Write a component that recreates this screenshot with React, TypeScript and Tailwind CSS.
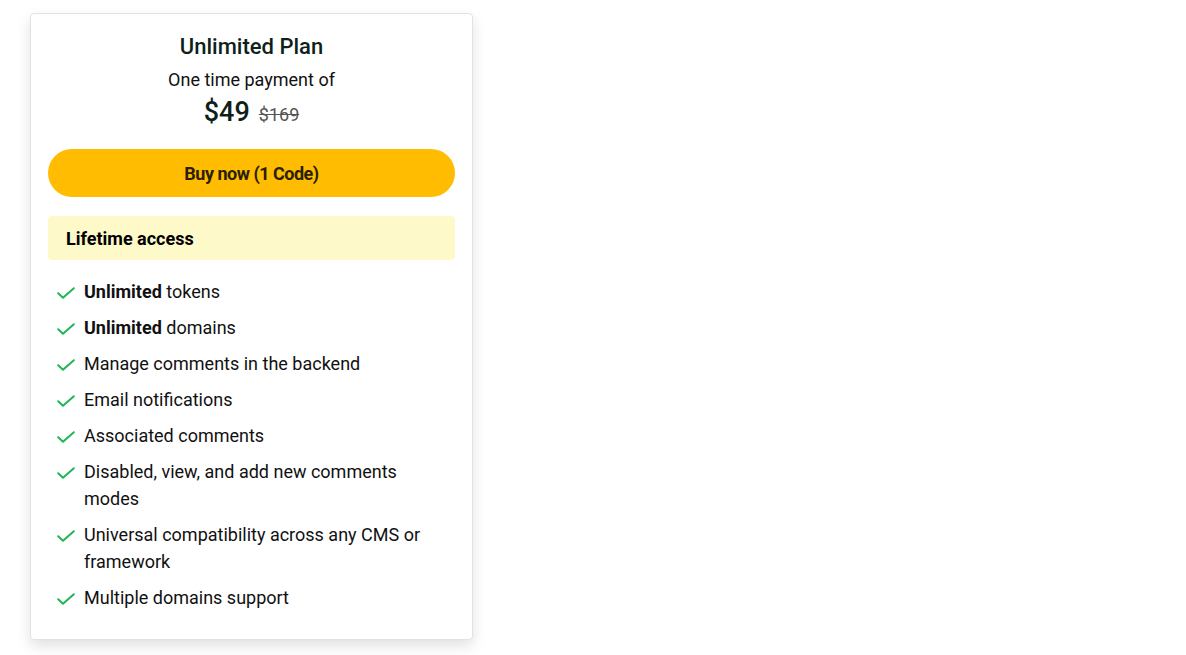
type Feature = { bold?: string; text: string };

const features: Feature[] = [
  { bold: "Unlimited", text: " tokens" },
  { bold: "Unlimited", text: " domains" },
  { text: "Manage comments in the backend" },
  { text: "Email notifications" },
  { text: "Associated comments" },
  { text: "Disabled, view, and add new comments modes" },
  { text: "Universal compatibility across any CMS or framework" },
  { text: "Multiple domains support" },
];

const CheckMark = () => (
  <svg viewBox="0 0 18 12" className="mt-[9px] h-[12px] w-[18px] shrink-0" fill="none">
    <path d="M1.2 6.2 6 10.8 16.8 1.2" stroke="#22b455" strokeWidth="2" strokeLinecap="round" strokeLinejoin="round" />
  </svg>
);

export default function App() {
  return (
    <div className="min-h-[655px] bg-white pl-[30px] pt-[13px]" style={{ fontFamily: "Roboto, 'Noto Sans', sans-serif" }}>
      <div className="w-[443px] rounded-[4px] border border-[#e2e2e2] bg-white px-[17px] pb-[28px] pt-[19px] shadow-[0_6px_14px_rgba(0,0,0,0.12)]">
        <div className="flex flex-col items-center">
          <h2 className="text-[22px] leading-[28px] font-medium text-[#0f1f1a]">Unlimited Plan</h2>
          <p className="mt-[8px] text-[18px] leading-[22px] text-[#111]">One time payment of</p>
          <div className="mt-[4px] flex items-baseline gap-[9px]">
            <span className="text-[27px] leading-[34px] font-medium text-[#0f1f1a]">$49</span>
            <span className="text-[18px] text-[#555] line-through">$169</span>
          </div>
        </div>
        <button className="mt-[20px] flex h-[48px] w-full items-center justify-center rounded-full bg-[#ffbc00] text-[18px] font-bold tracking-[-0.5px] text-[#2a1f00]">
          Buy now (1 Code)
        </button>
        <div className="mt-[19px] flex h-[44px] items-center rounded-[4px] bg-[#fef9c9] px-[18px] text-[18px] font-bold text-black">
          Lifetime access
        </div>
        <ul className="mt-[18px] flex flex-col gap-[9px] pl-[9px] pr-[24px]">
          {features.map((f) => (
            <li key={f.text} className="flex items-start gap-[9px] text-[18px] leading-[27px] text-[#111]">
              <CheckMark />
              <span>
                {f.bold && <b className="font-bold">{f.bold}</b>}
                {f.text}
              </span>
            </li>
          ))}
        </ul>
      </div>
    </div>
  );
}
